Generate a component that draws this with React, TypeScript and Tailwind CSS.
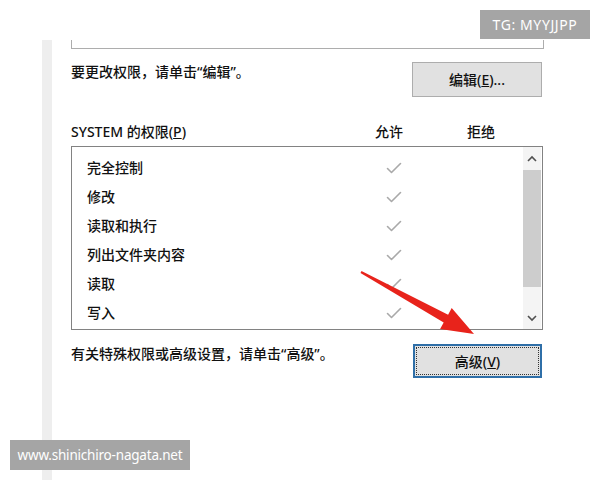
import React from "react";

const perms = ["完全控制", "修改", "读取和执行", "列出文件夹内容", "读取", "写入"];

function Check() {
    return (
        <svg width="16" height="12" viewBox="0 0 16 12" fill="none">
            <path d="M1.5 6.5 L5.5 10.5 L14.5 1.5" stroke="#a9a9a9" strokeWidth="1.6" strokeLinecap="round" strokeLinejoin="round" />
        </svg>
    );
}

function Chevron({ up }: { up?: boolean }) {
    return (
        <svg width="10" height="7" viewBox="0 0 10 7" fill="none">
            <path d={up ? "M1 6 L5 2 L9 6" : "M1 1 L5 5 L9 1"} stroke="#505050" strokeWidth="1.6" />
        </svg>
    );
}

export default function App() {
    return (
        <div
            className="relative w-[600px] h-[480px] overflow-hidden bg-white text-[#111111]"
            style={{ fontFamily: '"Noto Sans", "Noto Sans CJK SC", sans-serif' }}
        >
            <div className="flex h-full pt-[40px]">
                <div className="w-[42px] shrink-0" />
                <div className="w-[10px] shrink-0 bg-[#eeeeee]" />
                <div className="flex flex-col pl-[19px] w-[491px]">
                    {/* tail of the box above */}
                    <div className="h-[9px] w-[473px] border-x border-b border-[#adadad]" />

                    <div className="flex items-start justify-between mt-[13px] w-[471px]">
                        <span className="text-[14px] leading-[20px] font-medium">要更改权限，请单击“编辑”。</span>
                        <button className="w-[130px] h-[35px] border border-[#adadad] bg-[#e1e1e1] text-[14px] font-medium">
                            编辑(<span className="underline">E</span>)...
                        </button>
                    </div>

                    <div className="flex items-center mt-[24px] h-[20px] text-[14px] font-medium">
                        <span className="w-[304px]">
                            SYSTEM 的权限(<span className="underline">P</span>)
                        </span>
                        <span className="w-[92px]">允许</span>
                        <span>拒绝</span>
                    </div>

                    <div className="flex mt-[5px] w-[472px] h-[184px] border border-[#828282] bg-white">
                        <div className="flex-1 flex flex-col pt-[6px] pl-[15px]">
                            {perms.map((p) => (
                                <div key={p} className="flex items-center h-[29px] text-[14px] font-medium">
                                    <span className="w-[299px]">{p}</span>
                                    <Check />
                                </div>
                            ))}
                        </div>
                        <div className="w-[18px] mr-px flex flex-col bg-[#f4f4f4]">
                            <div className="h-[23px] flex items-center justify-center">
                                <Chevron up />
                            </div>
                            <div className="h-[117px] bg-[#cdcdcd]" />
                            <div className="flex-1" />
                            <div className="h-[22px] flex items-center justify-center">
                                <Chevron />
                            </div>
                        </div>
                    </div>

                    <div className="flex items-start justify-between mt-[14px] w-[471px]">
                        <span className="text-[14px] leading-[20px] font-medium">有关特殊权限或高级设置，请单击“高级”。</span>
                        <button className="w-[129px] h-[34px] border-2 border-[#2f6fa8] bg-[#e1e1e1] p-px">
                            <div className="w-full h-full border border-dotted border-[#333] flex items-center justify-center text-[14px] font-medium">
                                高级(<span className="underline">V</span>)
                            </div>
                        </button>
                    </div>
                </div>
            </div>

            {/* red arrow */}
            <svg className="absolute left-0 top-0" width="600" height="480" viewBox="0 0 600 480">
                <polygon
                    points="361.5,271.1 448.1,314.7 451.7,308.1 474,334 440.1,329.1 443.7,322.5 360.5,272.9"
                    fill="#e8231b"
                />
            </svg>

            <div className="absolute top-[10px] left-[480px] w-[110px] h-[29px] bg-[#a5a5a5] flex items-center justify-center text-white text-[14px] tracking-[0.6px]">
                TG: MYYJJPP
            </div>
            <div className="absolute top-[440px] left-[10px] w-[180px] h-[30px] bg-[#a5a5a5] flex items-center justify-center text-white text-[13.5px] tracking-[-0.2px]">
                www.shinichiro-nagata.net
            </div>
        </div>
    );
}
